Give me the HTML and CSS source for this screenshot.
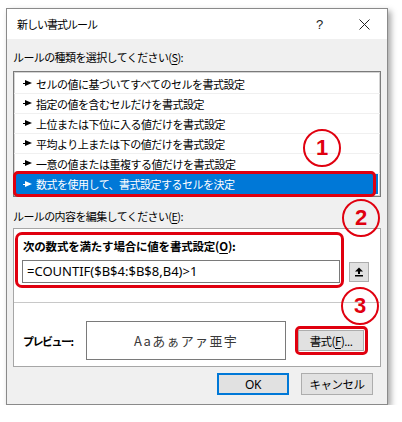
FILE: index.html
```html
<!DOCTYPE html>
<html lang="ja">
<head>
    <meta charset="UTF-8">
    <title>新しい書式ルール</title>
    <link rel="stylesheet" href="styles.css">
</head>
<body>
    <div class="dialog">
        <div class="titlebar">
            <span class="title">新しい書式ルール</span>
            <span class="tb-btn help">?</span>
            <span class="tb-btn close">
                <svg width="11" height="11" viewBox="0 0 11 11"><path d="M0.5 0.5 L10.5 10.5 M10.5 0.5 L0.5 10.5" stroke="#222" stroke-width="1" fill="none"/></svg>
            </span>
        </div>

        <div class="body">
            <div class="label">ルールの種類を選択してください(<u>S</u>):</div>

            <ul class="rule-list">
                <li><i class="arrow"></i>セルの値に基づいてすべてのセルを書式設定</li>
                <li><i class="arrow"></i>指定の値を含むセルだけを書式設定</li>
                <li><i class="arrow"></i>上位または下位に入る値だけを書式設定</li>
                <li><i class="arrow"></i>平均より上または下の値だけを書式設定</li>
                <li><i class="arrow"></i>一意の値または重複する値だけを書式設定</li>
                <li class="selected"><i class="arrow"></i>数式を使用して、書式設定するセルを決定<span class="mark-rect"></span></li>
                <span class="mark-circle c1">1</span>
            </ul>

            <div class="label label-edit">ルールの内容を編集してください(<u>E</u>):</div>

            <div class="edit-box">
                <div class="edit-top">
                    <div class="bold-label">次の数式を満たす場合に値を書式設定(<u>O</u>):</div>
                    <div class="formula-row">
                        <div class="formula">=COUNTIF($B$4:$B$8,B4)&gt;1</div>
                        <span class="collapse">
                            <svg width="10" height="11" viewBox="0 0 10 11"><path d="M1 5.5 L5 1.5 L9 5.5 Z" fill="#000"/><rect x="4" y="5" width="2" height="3" fill="#000"/><rect x="1" y="9" width="8" height="1.5" fill="#000"/></svg>
                        </span>
                    </div>
                </div>
                <div class="edit-bottom">
                    <span class="preview-label">プレビュー:</span>
                    <div class="preview">Aaあぁアァ亜宇</div>
                    <span class="btn format-btn">書式(<u>F</u>)...<span class="mark-rect"></span></span>
                </div>
                <span class="mark-rect formula-mark"></span>
                <span class="mark-circle c2">2</span>
                <span class="mark-circle c3">3</span>
            </div>

            <div class="buttons">
                <span class="btn ok">OK</span>
                <span class="btn">キャンセル</span>
            </div>
        </div>
    </div>
</body>
</html>
```

FILE: styles.css
```css
body {
    margin: 0;
    background-color: #fff;
    font-family: "Noto Sans CJK JP", "Noto Sans", sans-serif;
    font-size: 11px;
    color: #000;
}
u {
    text-decoration: underline;
    text-underline-offset: 2px;
}
.dialog {
    margin: 8px 0 0 6px;
    width: 382px;
    border: 1px solid #8a8a8a;
    box-shadow: 3px 3px 6px rgba(0,0,0,0.35);
    box-sizing: border-box;
}
.titlebar {
    height: 30px;
    background-color: #fff;
    display: flex;
    align-items: center;
    padding-left: 10px;
}
.title {
    flex: 1;
    letter-spacing: -1px;
}
.tb-btn {
    width: 45px;
    height: 30px;
    display: flex;
    align-items: center;
    justify-content: center;
}
.help {
    font-family: "Liberation Sans", sans-serif;
    font-size: 13px;
    color: #222;
}
.body {
    background-color: #f0f0f0;
    padding: 0 6px 9px;
}
.label {
    line-height: 16px;
    padding-top: 10px;
    margin-bottom: 6px;
    letter-spacing: -0.6px;
}
.label-edit {
    padding-top: 11px;
    margin-bottom: 4px;
}
.rule-list {
    position: relative;
    list-style: none;
    margin: 0;
    padding: 2px 0;
    background-color: #fff;
    border: 1px solid #7a7a7a;
    box-shadow: inset 0 0 0 1px #d4d4d4;
}
.rule-list li {
    position: relative;
    height: 20px;
    line-height: 20px;
    padding-left: 9px;
    letter-spacing: -0.5px;
    border-bottom: 1px solid #f0f0f0;
    box-sizing: border-box;
    display: flex;
    align-items: center;
}
.rule-list li.selected {
    background-color: #0078d7;
    color: #fff;
    margin: 0 2px;
    padding-left: 7px;
    border-bottom: none;
}
.arrow {
    width: 9px;
    height: 7px;
    margin-right: 4px;
    background:
        linear-gradient(#000, #000) 0 3px / 4px 1px no-repeat;
    position: relative;
}
.arrow::after {
    content: "";
    position: absolute;
    left: 2px;
    top: 0;
    border-left: 7px solid #000;
    border-top: 3.5px solid transparent;
    border-bottom: 3.5px solid transparent;
}
.selected .arrow {
    background:
        linear-gradient(#fff, #fff) 0 3px / 4px 1px no-repeat;
}
.selected .arrow::after {
    border-left-color: #fff;
}
.mark-rect {
    position: absolute;
    left: -3px;
    top: -3px;
    right: 2px;
    bottom: -3px;
    border: 3px solid #e0000f;
    border-radius: 5px;
}
.mark-circle {
    position: absolute;
    width: 38px;
    height: 38px;
    border: 2.5px solid #e0000f;
    border-radius: 50%;
    box-sizing: border-box;
    display: flex;
    align-items: center;
    justify-content: center;
    color: #e0000f;
    font-family: "Liberation Sans", sans-serif;
    font-weight: bold;
    font-size: 22px;
}
.c1 {
    left: 289px;
    top: 57px;
}
.c2 {
    left: 328px;
    top: -30px;
}
.c3 {
    left: 327px;
    top: 58px;
}
.edit-box {
    position: relative;
    background-color: #fff;
    border: 1px solid #a6a6a6;
}
.edit-top {
    padding: 9px 0 19px 9px;
    border-bottom: 1px solid #c8c8c8;
}
.bold-label {
    font-weight: bold;
    font-size: 11.5px;
    line-height: 16px;
    letter-spacing: -0.2px;
}
.formula-row {
    margin-top: 6px;
    display: flex;
    align-items: center;
}
.formula {
    width: 318px;
    height: 23px;
    border: 1px solid #7a7a7a;
    box-sizing: border-box;
    padding-left: 4px;
    line-height: 21px;
    font-family: "Noto Sans", sans-serif;
    font-size: 13px;
    margin-left: -1px;
}
.collapse {
    margin-left: 9px;
    width: 20px;
    height: 20px;
    background-color: #e1e1e1;
    border: 1px solid #adadad;
    box-sizing: border-box;
    display: flex;
    align-items: center;
    justify-content: center;
}
.formula-mark {
    left: 1px;
    top: 3px;
    width: 329px;
    height: 56px;
    right: auto;
    bottom: auto;
    box-sizing: border-box;
    border-radius: 7px;
}
.edit-bottom {
    display: flex;
    align-items: center;
    padding: 18px 0 6px 9px;
}
.preview-label {
    width: 63px;
    font-weight: bold;
    letter-spacing: -1.5px;
}
.preview {
    width: 200px;
    height: 39px;
    border: 1px solid #7a7a7a;
    box-sizing: border-box;
    display: flex;
    align-items: center;
    justify-content: center;
    font-size: 13px;
    letter-spacing: 1.3px;
    color: #3a3a3a;
}
.btn {
    position: relative;
    display: flex;
    align-items: center;
    justify-content: center;
    height: 22px;
    width: 72px;
    background-color: #e1e1e1;
    border: 1px solid #adadad;
    box-sizing: border-box;
    font-size: 11.5px;
    letter-spacing: -0.5px;
}
.format-btn {
    margin-left: 12px;
    width: 66px;
    height: 21px;
}
.format-btn .mark-rect {
    left: -4px;
    top: -5px;
    right: -5px;
    bottom: -5px;
}
.buttons {
    display: flex;
    justify-content: flex-end;
    gap: 12px;
    margin: 6px 8px 0 0;
}
.ok {
    border: 2px solid #0078d7;
    font-family: "Noto Sans", sans-serif;
    font-size: 12px;
}
```
